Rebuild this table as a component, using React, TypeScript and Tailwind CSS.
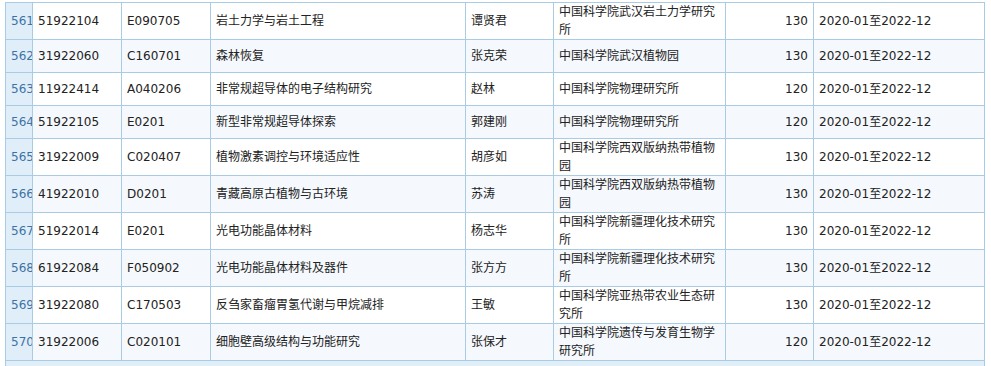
import React from "react";

const rows = [
  ["561", "51922104", "E090705", "岩土力学与岩土工程", "谭贤君", "中国科学院武汉岩土力学研究所", "130"],
  ["562", "31922060", "C160701", "森林恢复", "张克荣", "中国科学院武汉植物园", "130"],
  ["563", "11922414", "A040206", "非常规超导体的电子结构研究", "赵林", "中国科学院物理研究所", "120"],
  ["564", "51922105", "E0201", "新型非常规超导体探索", "郭建刚", "中国科学院物理研究所", "120"],
  ["565", "31922009", "C020407", "植物激素调控与环境适应性", "胡彦如", "中国科学院西双版纳热带植物园", "130"],
  ["566", "41922010", "D0201", "青藏高原古植物与古环境", "苏涛", "中国科学院西双版纳热带植物园", "130"],
  ["567", "51922014", "E0201", "光电功能晶体材料", "杨志华", "中国科学院新疆理化技术研究所", "130"],
  ["568", "61922084", "F050902", "光电功能晶体材料及器件", "张方方", "中国科学院新疆理化技术研究所", "130"],
  ["569", "31922080", "C170503", "反刍家畜瘤胃氢代谢与甲烷减排", "王敏", "中国科学院亚热带农业生态研究所", "130"],
  ["570", "31922006", "C020101", "细胞壁高级结构与功能研究", "张保才", "中国科学院遗传与发育生物学研究所", "120"],
];

const widths = [28, 89, 89, 255, 88, 172, 88, 171];

export default function App() {
  return (
    <div
      className="w-[991px] h-[366px] overflow-hidden bg-white pt-[2px]"
      style={{ fontFamily: '"DejaVu Sans", "Noto Sans CJK SC", sans-serif' }}
    >
      <div className="ml-[5px] w-[980px]">
        <table className="table-fixed border-separate border-spacing-0 w-[980px] text-[12px] leading-[18px] text-[#222]">
          <colgroup>
            {widths.map((w, i) => (
              <col key={i} style={{ width: w }} />
            ))}
          </colgroup>
          <tbody>
            {rows.map((r, i) => {
              const bg = i % 2 === 0 ? "bg-white" : "bg-[#f5f9fd]";
              const first = i === 0 ? "border-t" : "";
              const cell = `h-[33px] px-[5px] py-0 align-middle border-r border-b border-[#a9cbe3] ${first}`;
              return (
                <tr key={r[0]}>
                  <td
                    className={`${cell} border-l bg-[#dfeef8] text-[#3d72a6] whitespace-nowrap overflow-hidden`}
                  >
                    {r[0]}
                  </td>
                  <td className={`${cell} ${bg}`}>{r[1]}</td>
                  <td className={`${cell} ${bg}`}>{r[2]}</td>
                  <td className={`${cell} ${bg}`}>{r[3]}</td>
                  <td className={`${cell} ${bg}`}>{r[4]}</td>
                  <td className={`${cell} ${bg}`}>{r[5]}</td>
                  <td className={`${cell} ${bg} text-right`}>{r[6]}</td>
                  <td className={`${cell} ${bg}`}>2020-01至2022-12</td>
                </tr>
              );
            })}
          </tbody>
        </table>
        <div className="h-[6px] bg-[#e0eef8] border-x border-[#a9cbe3]" />
      </div>
    </div>
  );
}
